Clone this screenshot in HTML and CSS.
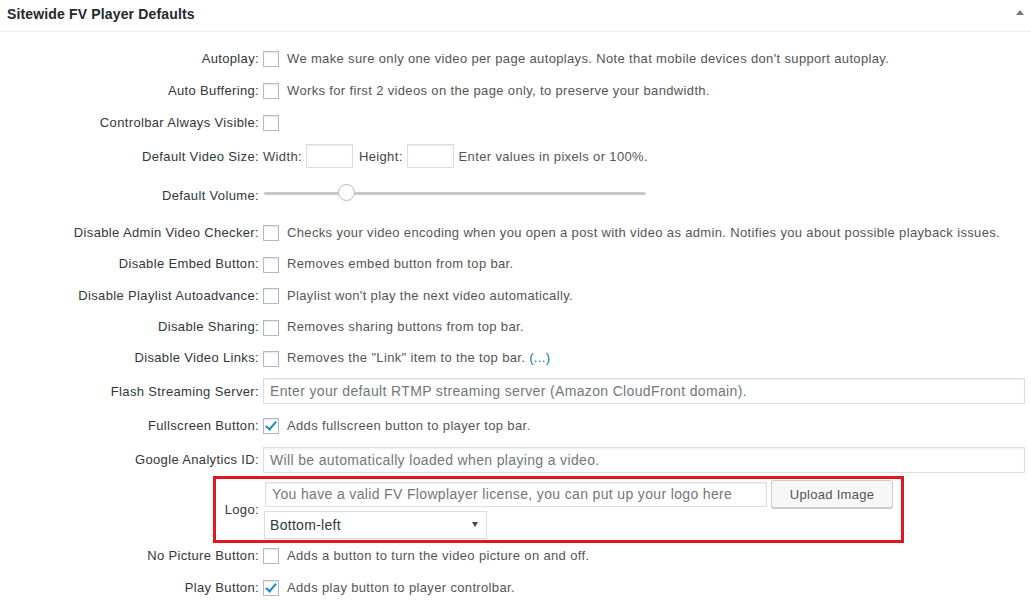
FILE: index.html
```html
<!DOCTYPE html>
<html>
<head>
<meta charset="utf-8">
<link rel="stylesheet" href="styles.css">
</head>
<body>
<div class="panel">
  <div class="panel-head">
    <h2 class="panel-title">Sitewide FV Player Defaults</h2>
    <span class="toggle-arrow"></span>
  </div>
  <div class="form">
    <div class="row h32 first">
      <div class="label">Autoplay:</div>
      <div class="field"><span class="cb"></span><span class="desc">We make sure only one video per page autoplays. Note that mobile devices don't support autoplay.</span></div>
    </div>
    <div class="row h32">
      <div class="label">Auto Buffering:</div>
      <div class="field"><span class="cb"></span><span class="desc">Works for first 2 videos on the page only, to preserve your bandwidth.</span></div>
    </div>
    <div class="row h32">
      <div class="label">Controlbar Always Visible:</div>
      <div class="field"><span class="cb"></span></div>
    </div>
    <div class="row h36">
      <div class="label">Default Video Size:</div>
      <div class="field">
        <span class="inline-label">Width:</span><span class="small-input"></span>
        <span class="inline-label gap-l">Height:</span><span class="small-input"></span>
        <span class="desc tight">Enter values in pixels or 100%.</span>
      </div>
    </div>
    <div class="row h42">
      <div class="label vol-label">Default Volume:</div>
      <div class="field">
        <div class="slider"><span class="track"></span><span class="thumb"></span></div>
      </div>
    </div>
    <div class="row h32">
      <div class="label">Disable Admin Video Checker:</div>
      <div class="field"><span class="cb"></span><span class="desc">Checks your video encoding when you open a post with video as admin. Notifies you about possible playback issues.</span></div>
    </div>
    <div class="row h31">
      <div class="label">Disable Embed Button:</div>
      <div class="field"><span class="cb"></span><span class="desc">Removes embed button from top bar.</span></div>
    </div>
    <div class="row h32">
      <div class="label">Disable Playlist Autoadvance:</div>
      <div class="field"><span class="cb"></span><span class="desc">Playlist won't play the next video automatically.</span></div>
    </div>
    <div class="row h31">
      <div class="label">Disable Sharing:</div>
      <div class="field"><span class="cb"></span><span class="desc">Removes sharing buttons from top bar.</span></div>
    </div>
    <div class="row h31">
      <div class="label">Disable Video Links:</div>
      <div class="field"><span class="cb"></span><span class="desc">Removes the "Link" item to the top bar. <a class="more" href="#">(...)</a></span></div>
    </div>
    <div class="row h36">
      <div class="label">Flash Streaming Server:</div>
      <div class="field"><span class="text-input wide">Enter your default RTMP streaming server (Amazon CloudFront domain).</span></div>
    </div>
    <div class="row h32">
      <div class="label">Fullscreen Button:</div>
      <div class="field"><span class="cb checked"></span><span class="desc">Adds fullscreen button to player top bar.</span></div>
    </div>
    <div class="row h37">
      <div class="label">Google Analytics ID:</div>
      <div class="field"><span class="text-input wide">Will be automatically loaded when playing a video.</span></div>
    </div>
    <div class="row logo-row">
      <div class="label">Logo:</div>
      <div class="field logo-field">
        <div class="logo-line">
          <span class="text-input logo-input">You have a valid FV Flowplayer license, you can put up your logo here</span>
          <span class="button">Upload Image</span>
        </div>
        <span class="select">Bottom-left<span class="select-arrow"></span></span>
      </div>
      <div class="highlight"></div>
    </div>
    <div class="row h32">
      <div class="label">No Picture Button:</div>
      <div class="field"><span class="cb"></span><span class="desc">Adds a button to turn the video picture on and off.</span></div>
    </div>
    <div class="row h32">
      <div class="label">Play Button:</div>
      <div class="field"><span class="cb checked"></span><span class="desc">Adds play button to player controlbar.</span></div>
    </div>
  </div>
</div>
</body>
</html>
```

FILE: styles.css
```css
html, body {
  margin: 0;
  padding: 0;
  background: #fff;
  overflow: hidden;
}
body {
  font-family: "Liberation Sans", Arial, sans-serif;
  font-size: 13px;
  letter-spacing: 0.35px;
  color: #444;
}
.panel {
  width: 1031px;
}
.panel-head {
  height: 31px;
  border-bottom: 1px solid #eee;
  display: flex;
  align-items: center;
  justify-content: space-between;
  padding: 0 7px;
  box-sizing: content-box;
}
.panel-title {
  margin: 0;
  font-size: 14px;
  font-weight: bold;
  color: #23282d;
  letter-spacing: 0.15px;
  position: relative;
  top: -2px;
}
.toggle-arrow {
  width: 0;
  height: 0;
  border-left: 4px solid transparent;
  border-right: 4px solid transparent;
  border-bottom: 5px solid #72777c;
  position: relative;
  top: -3px;
  right: 0;
}
.form {
  padding-top: 10px;
  padding-right: 6px;
}
.row {
  display: grid;
  grid-template-columns: 259px 1fr;
  column-gap: 4px;
  align-items: center;
  position: relative;
}
.h31 { height: 31px; }
.h32 { height: 32px; }
.h36 { height: 36px; }
.h37 { height: 37px; }
.h42 { height: 42px; }
.label {
  text-align: right;
  color: #32373c;
  white-space: nowrap;
}
.field {
  display: flex;
  align-items: center;
  white-space: nowrap;
}
.cb {
  width: 16px;
  height: 16px;
  box-sizing: border-box;
  border: 1px solid #b4b9be;
  background: #fff;
  box-shadow: inset 0 1px 2px rgba(0,0,0,0.1);
  flex: none;
  position: relative;
  top: 1px;
}
.cb.checked::after {
  content: "";
  position: absolute;
  left: 4px;
  top: 0px;
  width: 4px;
  height: 9px;
  border-right: 2px solid #1e8cbe;
  border-bottom: 2px solid #1e8cbe;
  transform: rotate(40deg);
}
.desc {
  margin-left: 8px;
  color: #555;
}
.desc.tight {
  margin-left: 5px;
}
.more {
  color: #0073aa;
  text-decoration: none;
}
.inline-label {
  color: #444;
  margin-right: 4px;
}
.inline-label.gap-l {
  margin-left: 6px;
}
.small-input {
  width: 47px;
  height: 24px;
  box-sizing: border-box;
  border: 1px solid #ddd;
  box-shadow: inset 0 1px 2px rgba(0,0,0,0.07);
  background: #fff;
  flex: none;
}
.vol-label {
  position: relative;
  top: 0;
}
.slider {
  position: relative;
  width: 382px;
  height: 18px;
  margin-left: 1px;
  top: -2px;
}
.track {
  position: absolute;
  left: 0;
  right: 0;
  top: 8px;
  height: 3px;
  background: #c8c8c8;
  border-radius: 2px;
}
.thumb {
  position: absolute;
  left: 74px;
  top: 0;
  width: 17px;
  height: 17px;
  box-sizing: border-box;
  border-radius: 50%;
  background: #fff;
  border: 1px solid #b8b8b8;
}
.text-input {
  display: flex;
  align-items: center;
  height: 26px;
  box-sizing: border-box;
  border: 1px solid #ddd;
  box-shadow: inset 0 1px 2px rgba(0,0,0,0.07);
  background: #fff;
  padding: 0 6px;
  font-size: 14px;
  letter-spacing: 0.35px;
  color: #72777c;
  overflow: hidden;
}
.text-input.wide {
  flex: 1;
}
.logo-row {
  height: 61px;
  align-items: center;
}
.logo-row .label {
  position: relative;
  top: 1px;
}
.logo-field {
  flex-direction: column;
  align-items: flex-start;
  gap: 3px;
  padding-left: 1px;
  position: relative;
  top: 1px;
}
.logo-line {
  display: flex;
  align-items: center;
  gap: 4px;
  padding-left: 1px;
}
.logo-input {
  width: 502px;
  height: 25px;
}
.button {
  display: inline-flex;
  align-items: center;
  justify-content: center;
  width: 122px;
  height: 28px;
  box-sizing: border-box;
  background: #f7f7f7;
  border: 1px solid #ccc;
  border-radius: 3px;
  box-shadow: 0 1px 0 #ccc;
  color: #555;
  font-size: 13px;
  letter-spacing: 0.3px;
}
.select {
  position: relative;
  display: flex;
  align-items: center;
  width: 223px;
  height: 28px;
  box-sizing: border-box;
  border: 1px solid #ddd;
  box-shadow: 0 1px 2px rgba(0,0,0,0.05);
  background: #fff;
  padding-left: 5px;
  font-size: 14px;
  letter-spacing: 0.3px;
  color: #32373c;
}
.select-arrow {
  position: absolute;
  right: 8px;
  top: 10px;
  width: 0;
  height: 0;
  border-left: 3.5px solid transparent;
  border-right: 3.5px solid transparent;
  border-top: 5px solid #444;
}
.highlight {
  position: absolute;
  left: 213px;
  top: -2px;
  width: 691px;
  height: 67px;
  box-sizing: border-box;
  border: 3px solid #e3161f;
  pointer-events: none;
}
```
